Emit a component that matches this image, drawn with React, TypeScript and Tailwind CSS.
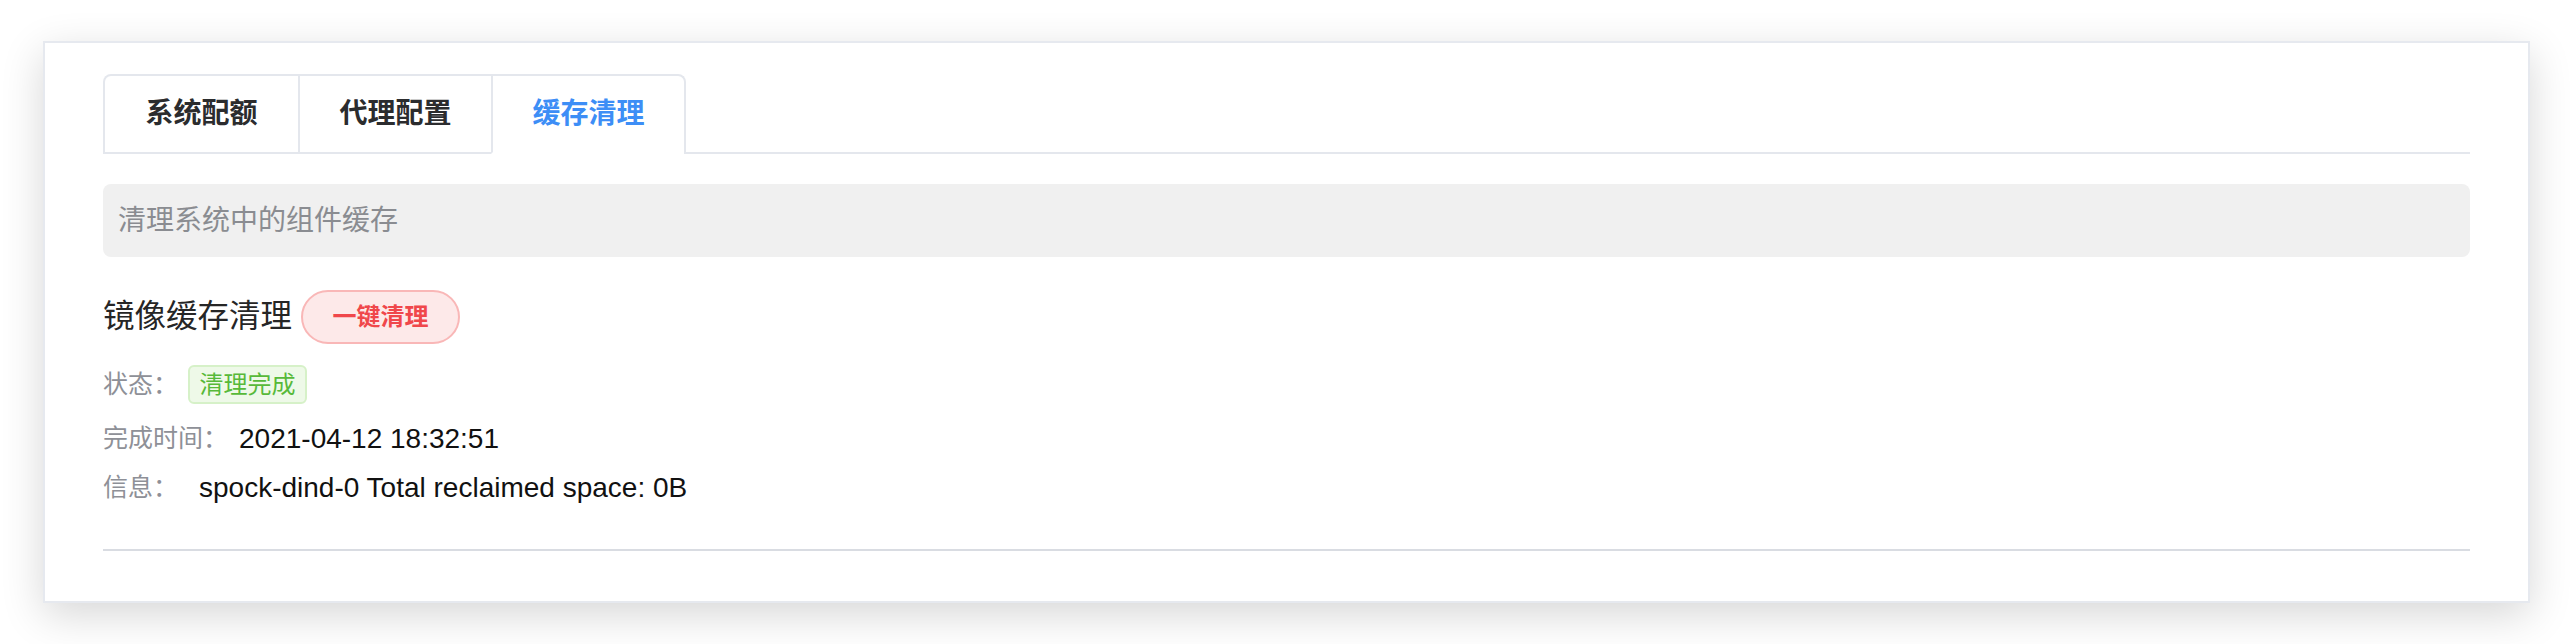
import React, { useState } from 'react';

const tabs = ['系统配额', '代理配置', '缓存清理'];

const font = { fontFamily: '"Liberation Sans", "Noto Sans CJK SC", sans-serif' };

export default function App() {
  const [active, setActive] = useState(2);

  return (
    <div className="min-h-screen bg-white pt-[41px] pl-[43px]" style={font}>
      <div className="w-[2487px] bg-white border-2 border-[#e6e9ef] shadow-[0_12px_40px_rgba(0,0,0,0.16)] px-[58px] pt-[31px] pb-[50px]">
        {/* tabs */}
        <div className="flex border-b-2 border-[#e4e7ed]">
          <div className="flex border-2 border-b-0 border-[#e4e7ed] rounded-t-[8px] -mb-[2px]">
            {tabs.map((t, i) => (
              <button
                key={t}
                onClick={() => setActive(i)}
                className={`h-[78px] w-[193px] flex items-center justify-center text-[28px] font-bold border-b-2 ${
                  i > 0 ? 'border-l-2 border-l-[#e4e7ed]' : ''
                } ${active === i ? 'text-[#3d8ef6] border-b-white' : 'text-[#2b2c2e] border-b-[#e4e7ed]'}`}
              >
                {t}
              </button>
            ))}
          </div>
        </div>

        <div className="mt-[30px] h-[73px] rounded-[8px] bg-[#f0f0f0] flex items-center pl-[15px] text-[28px] text-[#8a8c91]">
          清理系统中的组件缓存
        </div>

        <div className="mt-[33px] flex items-center">
          <span className="text-[31.5px] text-[#262626] leading-none">镜像缓存清理</span>
          <button className="ml-[9px] h-[54px] w-[159px] rounded-full border-2 border-[#f9b7b7] bg-[#fde9e9] text-[#f0474b] text-[24px] font-semibold flex items-center justify-center">
            一键清理
          </button>
        </div>

        <div className="mt-[21px] flex items-center h-[39px]">
          <span className="text-[25px] text-[#8e9097]">状态：</span>
          <span className="ml-[10px] h-[39px] w-[119px] rounded-[6px] border-2 border-[#d6f1c8] bg-[#eef9e8] text-[#57b939] text-[24px] flex items-center justify-center">
            清理完成
          </span>
        </div>

        <div className="mt-[15px] flex items-center h-[40px]">
          <span className="text-[25px] text-[#8e9097]">完成时间：</span>
          <span className="ml-[11px] text-[28px] text-[#111]">2021-04-12 18:32:51</span>
        </div>

        <div className="mt-[9px] flex items-center h-[40px]">
          <span className="text-[25px] text-[#8e9097]">信息：</span>
          <span className="ml-[21px] text-[28px] text-[#111]">spock-dind-0 Total reclaimed space: 0B</span>
        </div>

        <div className="mt-[41px] h-[2px] bg-[#d9dce2]" />
      </div>
    </div>
  );
}
